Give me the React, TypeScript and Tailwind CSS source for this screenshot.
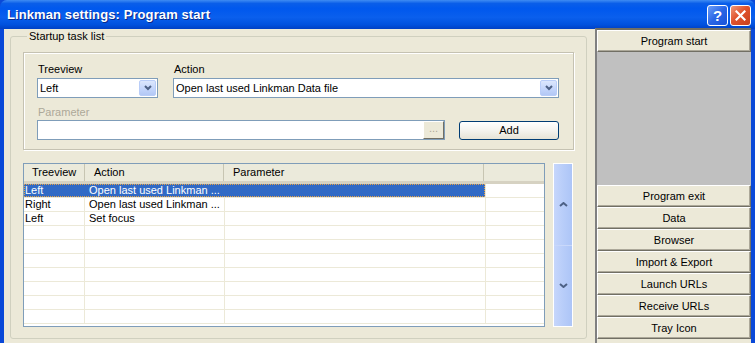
import React from 'react';

const rows = [
  { tree: 'Left', action: 'Open last used Linkman ...', param: '' },
  { tree: 'Right', action: 'Open last used Linkman ...', param: '' },
  { tree: 'Left', action: 'Set focus', param: '' },
];

const sections = ['Program exit', 'Data', 'Browser', 'Import & Export', 'Launch URLs', 'Receive URLs', 'Tray Icon'];

const ComboArrow: React.FC = () => (
  <div className="w-[17px] h-[16px] rounded-[2px] border border-[#b9cdf8] bg-[linear-gradient(180deg,#dce7fd_0%,#c2d4fb_60%,#b3c8f5_100%)] flex items-center justify-center">
    <svg width="8" height="6" viewBox="0 0 8 6">
      <path d="M1 1 L4 4 L7 1" fill="none" stroke="#4d6185" strokeWidth="2" />
    </svg>
  </div>
);

const XPButton: React.FC<{ label: string }> = ({ label }) => (
  <div className="h-[22px] border-t border-l border-t-white border-l-white border-b border-r border-b-[#716f64] border-r-[#716f64] bg-[#ece9d8] shadow-[inset_-1px_-1px_0_#aca899] flex items-center justify-center text-[11px] text-black">
    {label}
  </div>
);

const App: React.FC = () => {
  return (
    <div className="w-[755px] h-[343px] overflow-hidden flex flex-col bg-[#0a49d8] select-none" style={{ fontFamily: '"Liberation Sans", Arial, sans-serif' }}>
      {/* Title bar */}
      <div className="h-[29px] shrink-0 flex items-center justify-between pl-[7px] pr-[4px] rounded-t-[7px] bg-[linear-gradient(180deg,#3f8cf3_0%,#0a5ee9_12%,#0058ee_30%,#0a5fed_60%,#0051de_85%,#0040c4_100%)]">
        <span className="text-white font-bold text-[13px] tracking-[0.1px] [text-shadow:1px_1px_0_#0a2a8a]">Linkman settings: Program start</span>
        <div className="flex gap-[2px] mt-[1px]">
          <div className="w-[21px] h-[21px] rounded-[3px] border border-white bg-[linear-gradient(135deg,#6c9ef8_0%,#2a66e6_50%,#1a53d8_100%)] flex items-center justify-center text-white font-bold text-[15px] leading-none">?</div>
          <div className="w-[21px] h-[21px] rounded-[3px] border border-white bg-[linear-gradient(135deg,#f09a7a_0%,#e0532c_45%,#c9401c_100%)] flex items-center justify-center">
            <svg width="11" height="11" viewBox="0 0 11 11">
              <path d="M1.5 1.5 L9.5 9.5 M9.5 1.5 L1.5 9.5" stroke="white" strokeWidth="2.2" strokeLinecap="square" />
            </svg>
          </div>
        </div>
      </div>

      {/* Client area */}
      <div className="flex-1 flex mx-[4px] bg-[#ece9d8]">
        {/* Left side */}
        <div className="w-[587px] shrink-0 pl-[6px] pt-[1px]">
          <fieldset className="w-[577px] h-[309px] border border-[#d0d0bf] rounded-[3px] pl-[12px] pr-[12px] text-[11px] text-black">
            <legend className="px-[2px] ml-[4px] leading-[13px] text-[#000]">Startup task list</legend>

            {/* Input panel */}
            <div className="mt-[9px] w-[551px] h-[98px] border border-[#c5c2b2] shadow-[inset_1px_1px_0_#ffffff,1px_1px_0_#ffffff] pl-[13px] pt-[9px]">
              <div className="flex gap-[15px]">
                <div className="w-[121px]">
                  <div className="h-[14px] leading-[14px] pl-[1px]">Treeview</div>
                  <div className="mt-[2px] h-[20px] border border-[#7f9db9] bg-white flex items-center justify-between pl-[2px] pr-[1px]">
                    <span>Left</span>
                    <ComboArrow />
                  </div>
                </div>
                <div className="w-[386px]">
                  <div className="h-[14px] leading-[14px] pl-[1px]">Action</div>
                  <div className="mt-[2px] h-[20px] border border-[#7f9db9] bg-white flex items-center justify-between pl-[2px] pr-[1px]">
                    <span>Open last used Linkman Data file</span>
                    <ComboArrow />
                  </div>
                </div>
              </div>
              <div className="mt-[7px] h-[14px] leading-[14px] pl-[1px] text-[#aca899]">Parameter</div>
              <div className="mt-[1px] flex items-center gap-[14px]">
                <div className="w-[408px] h-[20px] border border-[#7f9db9] bg-white flex justify-end items-center pr-[0px]">
                  <div className="w-[21px] h-[18px] border-t border-l border-white border-b border-r border-b-[#716f64] border-r-[#716f64] bg-[#ece9d8] flex items-center justify-center text-[#aca899] leading-none pb-[3px]">...</div>
                </div>
                <div className="w-[100px] h-[19px] rounded-[3px] border border-[#003c74] bg-[linear-gradient(180deg,#ffffff_0%,#f4f3ee_50%,#e6e3d6_100%)] flex items-center justify-center">Add</div>
              </div>
            </div>

            {/* List + spinner */}
            <div className="mt-[13px] flex gap-[8px]">
              <div className="w-[522px] h-[164px] border border-[#7f9db9] bg-white overflow-hidden">
                <div className="h-[20px] flex bg-[#ebeadb] border-b-[3px] border-b-[#d6d2c2]">
                  <div className="w-[61px] pl-[8px] flex items-center border-r border-r-[#c7c5b2]">Treeview</div>
                  <div className="w-[139px] pl-[9px] flex items-center border-r border-r-[#c7c5b2]">Action</div>
                  <div className="w-[260px] pl-[9px] flex items-center border-r border-r-[#c7c5b2]">Parameter</div>
                  <div className="flex-1" />
                </div>
                {Array.from({ length: 10 }).map((_, i) => {
                  const r = rows[i];
                  const sel = i === 0;
                  return (
                    <div key={i} className="h-[14px] flex leading-[13px] border-b border-b-[#ece9d8]">
                      <div className={`w-[461px] flex ${sel ? 'bg-[#316ac5] text-white outline-1 outline-dotted outline-[#e6a246] -outline-offset-1' : ''}`}>
                        <div className={`w-[61px] pl-[1px] ${sel ? '' : 'border-r border-r-[#ece9d8]'}`}>{r?.tree}</div>
                        <div className={`w-[140px] pl-[4px] ${sel ? '' : 'border-r border-r-[#ece9d8]'}`}>{r?.action}</div>
                        <div className="flex-1" />
                      </div>
                      <div className="flex-1 border-l border-l-[#ece9d8]" />
                    </div>
                  );
                })}
              </div>
              <div className="w-[20px] h-[164px] border border-white flex flex-col">
                <div className="flex-1 bg-[linear-gradient(90deg,#c6d6fb_0%,#b8cdf9_50%,#adc5f7_100%)] flex items-center justify-center border-b border-b-[#c9d8fa]">
                  <svg width="9" height="5" viewBox="0 0 9 5"><path d="M1 4 L4.5 1 L8 4" fill="none" stroke="#4d6185" strokeWidth="2" /></svg>
                </div>
                <div className="flex-1 bg-[linear-gradient(90deg,#c6d6fb_0%,#b8cdf9_50%,#adc5f7_100%)] flex items-center justify-center">
                  <svg width="9" height="5" viewBox="0 0 9 5"><path d="M1 1 L4.5 4 L8 1" fill="none" stroke="#4d6185" strokeWidth="2" /></svg>
                </div>
              </div>
            </div>
          </fieldset>
        </div>

        {/* Right side: section selector */}
        <div className="ml-[4px] mt-[-1px] w-[156px] flex flex-col border-l-2 border-t-2 border-l-[#808080] border-t-[#716f64] pl-[0px]">
          <XPButton label="Program start" />
          <div className="h-[133px] bg-[#c0c0c0]" />
          {sections.map((s) => (
            <XPButton key={s} label={s} />
          ))}
        </div>
      </div>
    </div>
  );
};

export default App;
